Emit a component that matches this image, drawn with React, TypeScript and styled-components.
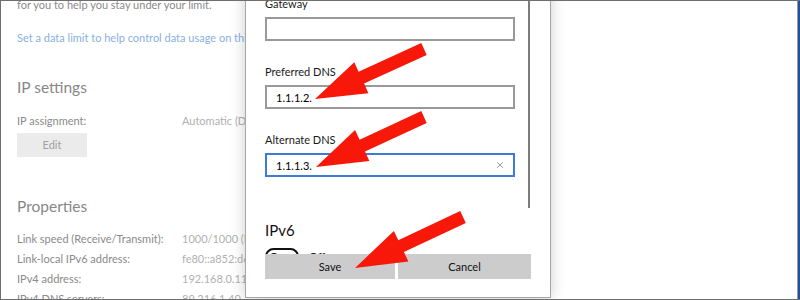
import React from "react";
import styled, { createGlobalStyle } from "styled-components";
import { X } from "lucide-react";

const GlobalStyle = createGlobalStyle`
  html, body {
    margin: 0;
    padding: 0;
    background: #ffffff;
  }
  body {
    font-family: Lato, "Open Sans", sans-serif;
  }
`;

type ArrowProps = {
  tail: [number, number];
  tip: [number, number];
};

// annotation arrow: straight shaft + wide head, drawn tail -> tip
const arrowPoints = ({ tail, tip }: ArrowProps) => {
  const dx = tip[0] - tail[0];
  const dy = tip[1] - tail[1];
  const len = Math.hypot(dx, dy);
  const ux = dx / len;
  const uy = dy / len;
  const nx = -uy;
  const ny = ux;
  const shaft = 6.5;
  const head = 17;
  const headLen = 51;
  const bx = tip[0] - ux * headLen;
  const by = tip[1] - uy * headLen;
  const pts = [
    [tail[0] + nx * shaft, tail[1] + ny * shaft],
    [bx + nx * shaft, by + ny * shaft],
    [bx + nx * head, by + ny * head],
    [tip[0], tip[1]],
    [bx - nx * head, by - ny * head],
    [bx - nx * shaft, by - ny * shaft],
    [tail[0] - nx * shaft, tail[1] - ny * shaft],
  ];
  return pts.map((p) => p.map((v) => v.toFixed(1)).join(",")).join(" ");
};

const arrows: ArrowProps[] = [
  { tail: [424, 49], tip: [315, 99] },
  { tail: [424, 117], tip: [316, 167] },
  { tail: [463, 217], tip: [355, 268] },
];

const pageRows = [
  { label: "Link speed (Receive/Transmit):", value: "1000/1000 (Mbps)" },
  { label: "Link-local IPv6 address:", value: "fe80::a852:d6c1:9f2e:11a4%6" },
  { label: "IPv4 address:", value: "192.168.0.11" },
  { label: "IPv4 DNS servers:", value: "89.216.1.40" },
];

export default function App() {
  return (
    <>
      <GlobalStyle />
      <Stage>
        <Frame>
          <Window>
            <Page>
              <Para>for you to help you stay under your limit.</Para>
              <Link>Set a data limit to help control data usage on this network</Link>
              <PageHeading $gap={27}>IP settings</PageHeading>
              <InfoRow $gap={12}>
                <span>IP assignment:</span>
                <Value>Automatic (DHCP)</Value>
              </InfoRow>
              <EditButton>Edit</EditButton>
              <PageHeading $gap={37}>Properties</PageHeading>
              <RowList>
                {pageRows.map((r) => (
                  <InfoRow key={r.label}>
                    <span>{r.label}</span>
                    <Value>{r.value}</Value>
                  </InfoRow>
                ))}
              </RowList>
            </Page>

            <Dialog>
              <Body>
                <Content>
                  <Field>
                    <Label>Gateway</Label>
                    <Input />
                  </Field>
                  <Field>
                    <Label>Preferred DNS</Label>
                    <Input>1.1.1.2.</Input>
                  </Field>
                  <Field>
                    <Label>Alternate DNS</Label>
                    <Input $focused>
                      <span>1.1.1.3.</span>
                      <Clear>
                        <X size={10} strokeWidth={1.4} />
                      </Clear>
                    </Input>
                  </Field>
                  <SectionTitle>IPv6</SectionTitle>
                  <ToggleRow>
                    <Toggle>
                      <Knob />
                    </Toggle>
                    <span>Off</span>
                  </ToggleRow>
                </Content>
                <Rail>
                  <Thumb />
                </Rail>
              </Body>
              <Footer>
                <DialogButton>Save</DialogButton>
                <DialogButton>Cancel</DialogButton>
              </Footer>
            </Dialog>
          </Window>
          <TaskEdge />
        </Frame>

        <Notes viewBox="0 0 800 300" width="800" height="300">
          {arrows.map((a, i) => (
            <polygon key={i} points={arrowPoints(a)} fill="#f7180a" />
          ))}
        </Notes>
      </Stage>
    </>
  );
}

const Stage = styled.div`
  position: relative;
  width: 800px;
  height: 300px;
  overflow: hidden;
`;

const Frame = styled.div`
  width: 800px;
  height: 300px;
  box-sizing: border-box;
  border: 1px solid #6e6e6e;
  border-right: none;
  display: flex;
`;

const Window = styled.div`
  position: relative;
  flex: 1;
  border-right: 1px solid #9c9c9c;
  background: #fff;
  overflow: hidden;
`;

const TaskEdge = styled.div`
  width: 2px;
  background: #224f9c;
`;

const Page = styled.div`
  padding-left: 16px;
  font-size: 11px;
  line-height: 20px;
  color: #8a8a8a;
  white-space: nowrap;
`;

const Para = styled.div`
  margin-top: -6px;
`;

const Link = styled.div`
  margin-top: 13px;
  color: #88b0e2;
`;

const PageHeading = styled.div<{ $gap: number }>`
  margin-top: ${(p) => p.$gap}px;
  font-size: 15.5px;
  line-height: 24px;
  color: #878787;
`;

const RowList = styled.div`
  margin-top: 11px;
`;

const InfoRow = styled.div<{ $gap?: number }>`
  margin-top: ${(p) => p.$gap ?? 0}px;
  display: grid;
  grid-template-columns: 165px auto;
`;

const Value = styled.span`
  color: #b0b0b0;
`;

const EditButton = styled.div`
  margin-top: 2px;
  width: 70px;
  height: 24px;
  background: #ebebeb;
  color: #a0a0a0;
  display: flex;
  align-items: center;
  justify-content: center;
`;

const Dialog = styled.div`
  position: absolute;
  left: 244px;
  top: -40px;
  bottom: 1px;
  width: 306px;
  box-sizing: border-box;
  border: 1px solid #a6a6a6;
  background: #fff;
  box-shadow: 0 0 14px rgba(0, 0, 0, 0.2);
  display: flex;
  flex-direction: column;
  font-size: 11px;
  color: #111;
`;

const Body = styled.div`
  flex: 1;
  display: flex;
  overflow: hidden;
  padding-right: 20px;
`;

const Content = styled.div`
  flex: 1;
  display: flex;
  flex-direction: column;
  padding: 34px 0 0 19px;
`;

const Field = styled.div`
  margin-bottom: 23px;
`;

const Label = styled.div`
  line-height: 16px;
  margin-bottom: 5px;
  color: #1a1a1a;
`;

const Input = styled.div<{ $focused?: boolean }>`
  width: 250px;
  height: 24px;
  box-sizing: border-box;
  border: 2px solid ${(p) => (p.$focused ? "#3d7bd9" : "#999999")};
  padding: 0 8px 0 9px;
  display: flex;
  align-items: center;
  justify-content: space-between;
  color: #000;
`;

const Clear = styled.span`
  display: flex;
  color: #555;
`;

const SectionTitle = styled.div`
  margin-top: 20px;
  font-size: 15px;
  line-height: 20px;
  color: #111;
`;

const ToggleRow = styled.div`
  margin-top: 8px;
  display: flex;
  align-items: center;
  gap: 10px;
`;

const Toggle = styled.div`
  width: 34px;
  height: 17px;
  box-sizing: border-box;
  border: 2px solid #111;
  border-radius: 9px;
  display: flex;
  align-items: center;
  padding-left: 3px;
`;

const Knob = styled.div`
  width: 8px;
  height: 8px;
  border-radius: 50%;
  background: #111;
`;

const Rail = styled.div`
  width: 2px;
`;

const Thumb = styled.div`
  width: 2px;
  height: 246px;
  background: #7c7c7c;
`;

const Footer = styled.div`
  display: grid;
  grid-template-columns: 130px 133px;
  gap: 3px;
  padding: 0 0 18px 19px;
`;

const DialogButton = styled.div`
  height: 25px;
  background: #cccccc;
  color: #111;
  font-size: 11px;
  display: flex;
  align-items: center;
  justify-content: center;
`;

const Notes = styled.svg`
  position: absolute;
  left: 0;
  top: 0;
  pointer-events: none;
`;
